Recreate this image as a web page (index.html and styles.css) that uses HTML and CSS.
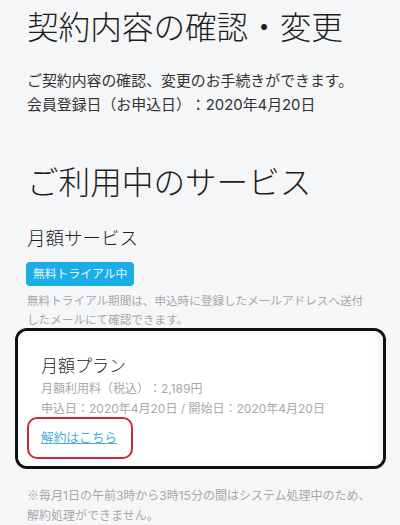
FILE: index.html
```html
<!DOCTYPE html>
<html lang="ja">
<head>
  <meta charset="UTF-8" />
  <meta name="viewport" content="width=device-width, initial-scale=1.0"/>
  <title>契約内容の確認・変更</title>
  <link rel="stylesheet" href="styles.css">
</head>
<body>
  <div class="contrato">
    <h1 class="titulo">契約内容の確認・変更</h1>
    <p class="intro">ご契約内容の確認、変更のお手続きができます。<br>会員登録日（お申込日）：2020年4月20日</p>

    <h1 class="titulo seccion">ご利用中のサービス</h1>
    <h2 class="subtitulo">月額サービス</h2>
    <div class="badge">無料トライアル中</div>
    <p class="nota">無料トライアル期間は、申込時に登録したメールアドレスへ送付<br>したメールにて確認できます。</p>

    <div class="marco">
      <div class="tarjeta">
        <h3 class="plan">月額プラン</h3>
        <p class="detalle">月額利用料（税込）：2,189円<br>申込日：2020年4月20日 / 開始日：2020年4月20日</p>
        <a class="cancelar" href="#">解約はこちら</a>
      </div>
    </div>

    <p class="nota pie"><span class="marca">※</span>毎月1日の午前3時から3時15分の間はシステム処理中のため、<br>解約処理ができません。</p>
  </div>
</body>
</html>
```

FILE: styles.css
```css
body {
  font-family: Inter, "Noto Sans CJK JP", "Noto Sans", sans-serif;
  background-color: #f5f6f8;
  color: #1e1e1e;
  margin: 0;
  padding: 0;
  text-spacing-trim: space-all;
}

.contrato {
  padding: 9px 20px 0 27px;
}

.titulo {
  font-size: 31.6px;
  font-weight: 300;
  line-height: 38px;
  margin: 0;
}

.seccion {
  margin-top: 47px;
}

.intro {
  font-size: 14.9px;
  line-height: 24px;
  margin: 22px 0 0;
  color: #333;
}

.subtitulo {
  font-size: 18.5px;
  font-weight: 300;
  line-height: 26px;
  margin: 23px 0 0;
}

.badge {
  display: inline-block;
  margin-top: 11px;
  margin-left: -1px;
  padding: 0 7px;
  height: 24px;
  line-height: 24px;
  font-size: 11.8px;
  color: #eaf7fd;
  background-color: #1aaee8;
  border-radius: 4px;
}

.nota {
  font-size: 11.6px;
  line-height: 19px;
  color: #a8a8a8;
  margin: 6px 0 0;
}

.marco {
  margin: -2px 0 0 -12px;
  width: 365px;
  border: 3px solid #111;
  border-radius: 12px;
  overflow: hidden;
}

.tarjeta {
  background-color: #ffffff;
  box-shadow: inset -4px 0 6px rgba(0, 0, 0, 0.06);
  padding: 22px 20px 18px 23px;
}

.plan {
  font-size: 17px;
  font-weight: 300;
  line-height: 26px;
  margin: 0;
}

.detalle {
  font-size: 12px;
  line-height: 20px;
  color: #a8a8a8;
  margin: 0;
}

.cancelar {
  position: relative;
  display: inline-block;
  margin-top: 9px;
  font-size: 12.7px;
  line-height: 20px;
  color: #4aaed6;
}

.cancelar::after {
  content: "";
  position: absolute;
  left: -14px;
  right: -16px;
  top: -11px;
  bottom: -11px;
  border: 2.5px solid #d0283a;
  border-radius: 10px;
}

.pie {
  font-size: 12px;
  line-height: 20px;
  margin-top: 16px;
}

.marca {
  font-family: "Noto Sans CJK JP", sans-serif;
}
```
